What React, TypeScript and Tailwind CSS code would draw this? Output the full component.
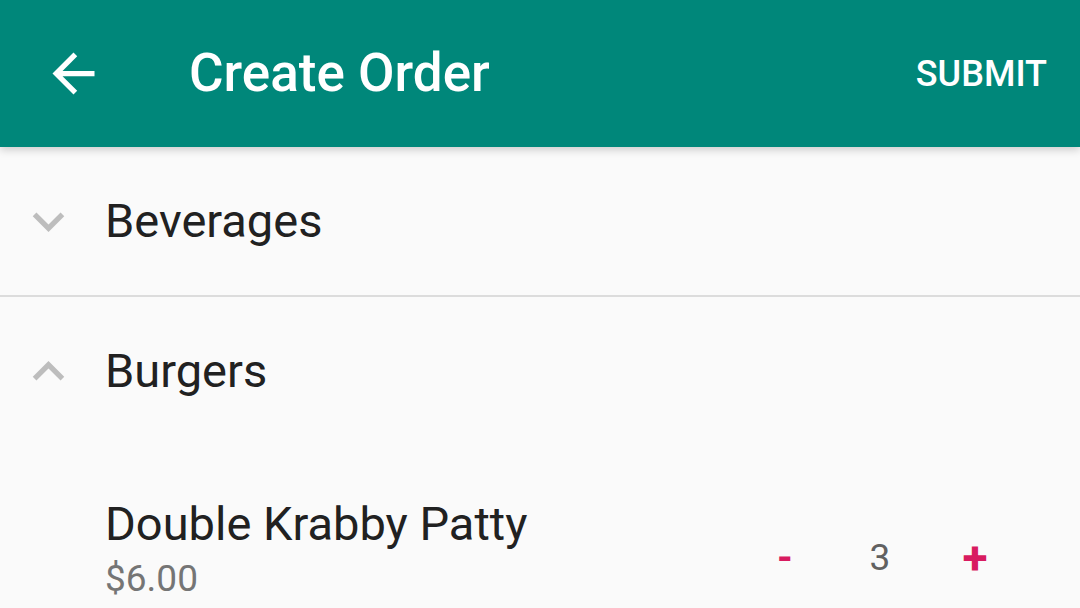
const ROBOTO = { fontFamily: "Roboto, 'Noto Sans', sans-serif" };

function BackArrow() {
  return (
    <svg viewBox="0 0 24 24" className="h-[63px] w-[63px] fill-white">
      <path d="M20 11H7.83l5.59-5.59L12 4l-8 8 8 8 1.41-1.41L7.83 13H20v-2z" />
    </svg>
  );
}

function Chevron({ open }: { open: boolean }) {
  return (
    <svg viewBox="0 0 24 24" className="h-[63px] w-[63px] shrink-0 fill-[#bdbdbd]">
      {open ? (
        <path d="M12 8l-6 6 1.41 1.41L12 10.83l4.59 4.58L18 14z" />
      ) : (
        <path d="M16.59 8.59L12 13.17 7.41 8.59 6 10l6 6 6-6z" />
      )}
    </svg>
  );
}

function Category({ name, open }: { name: string; open: boolean }) {
  return (
    <div className="flex h-[148px] items-center gap-[25px] pl-[17px]">
      <Chevron open={open} />
      <span className="text-[47px] text-[#212121]">{name}</span>
    </div>
  );
}

function Item({ name, price, qty }: { name: string; price: string; qty: number }) {
  return (
    <div className="flex items-center pl-[105px] pr-[80px] pt-[51px]">
      <div className="flex flex-1 flex-col">
        <span className="text-[47px] leading-[56px] text-[#212121]">{name}</span>
        <span className="mt-[5px] text-[37px] leading-[44px] text-[#757575]">{price}</span>
      </div>
      <div className="flex items-center pt-[19px]">
        <span className="w-[50px] text-center text-[40px] leading-[48px] font-bold text-[#d81b60]">-</span>
        <span className="w-[140px] text-center text-[37px] leading-[48px] text-[#616161]">{qty}</span>
        <span className="w-[50px] text-center text-[46px] leading-[48px] font-bold text-[#d81b60]">+</span>
      </div>
    </div>
  );
}

export default function App() {
  return (
    <div className="flex h-[608px] w-[1080px] flex-col overflow-hidden bg-[#fafafa]" style={ROBOTO}>
      <header className="relative z-10 flex h-[147px] shrink-0 items-center bg-[#00877a] pl-[42px] pr-[33px] shadow-[0_3px_8px_rgba(0,0,0,0.18)]">
        <BackArrow />
        <h1 className="ml-[84px] flex-1 text-[53px] font-medium text-white">Create Order</h1>
        <button className="text-[36px] font-medium text-white">SUBMIT</button>
      </header>

      <Category name="Beverages" open={false} />
      <div className="h-[2px] bg-[#dcdcdc]" />
      <Category name="Burgers" open={true} />
      <Item name="Double Krabby Patty" price="$6.00" qty={3} />
    </div>
  );
}
